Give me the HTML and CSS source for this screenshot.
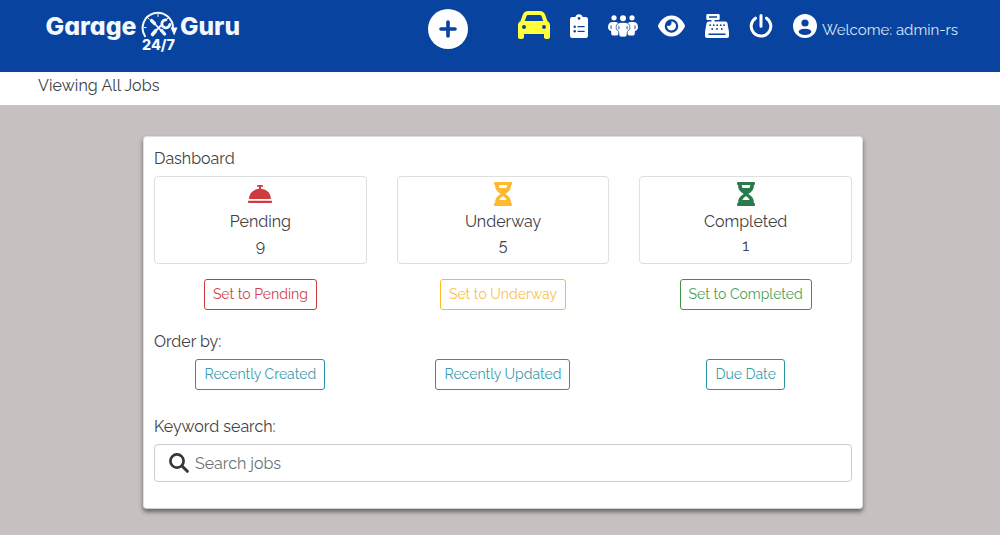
FILE: index.html
```html
<!DOCTYPE html>
<html lang="en">
<head>
<meta charset="utf-8">
<title>Garage Guru 24/7</title>
<link rel="stylesheet" href="styles.css">
</head>
<body>
<header class="topbar">
  <a class="logo" aria-label="Garage Guru 24/7">
    <svg width="200" height="46" viewBox="0 0 200 46">
      <g class="logo-text">
        <text x="4.500" y="27.500" font-size="24.500" textLength="91" lengthAdjust="spacingAndGlyphs">Garage</text>
        <text x="139" y="27.500" font-size="24.500" textLength="60" lengthAdjust="spacingAndGlyphs">Guru</text>
        <text x="101" y="42.500" font-size="14.500" textLength="33" lengthAdjust="spacingAndGlyphs">24/7</text>
      </g>
      <g fill="none" stroke="#f4f8ff" stroke-linecap="round">
        <path d="M104 29.200A15.200 15.200 0 1 1 132 22" stroke-width="2"/>
        <path d="M117 7v2.500M103 20.500h2M107 11l1.200 1.200M127 11l-1.200 1.200" stroke-width="1"/>
        <path d="M110.500 13.500l3 3" stroke-width="3.200"/>
        <path d="M113 16l7 7.500" stroke-width="1.800"/>
        <path d="M120.500 23.500l3 3.500" stroke-width="3.400"/>
        <path d="M111.500 27.500l3-3.500" stroke-width="3.600"/>
        <path d="M115 23.500l5-5" stroke-width="2"/>
        <path d="M125 12.800a4 4 0 1 0 3.800 4.700" stroke-width="2.800"/>
      </g>
      <path d="M129.500 20.500h7l-3.300 8z" fill="#f4f8ff"/>
    </svg>
  </a>
  <a class="add"><svg width="40" height="40" viewBox="0 0 40 40"><circle cx="20" cy="20" r="20" fill="#fff"/><path d="M20 13v14M13 20h14" stroke="#08439f" stroke-width="3.600" stroke-linecap="round"/></svg></a>
  <nav class="nav">
    <svg class="car" width="32" height="32" viewBox="0 0 512 512"><path d="M135.200 117.400L109.100 192H402.900l-26.100-74.600C372.300 104.600 360.200 96 346.600 96H165.400c-13.600 0-25.700 8.600-30.200 21.400zM39.600 196.800L74.800 96.300C88.300 57.800 124.600 32 165.400 32H346.600c40.800 0 77.100 25.800 90.600 64.300l35.200 100.500c23.200 9.600 39.600 32.500 39.600 59.200V448c0 17.700-14.300 32-32 32H448c-17.700 0-32-14.300-32-32V400H96v48c0 17.700-14.300 32-32 32H32c-17.700 0-32-14.300-32-32V256c0-26.700 16.400-49.600 39.600-59.200zM128 288a32 32 0 1 0-64 0 32 32 0 1 0 64 0zm288 32a32 32 0 1 0 0-64 32 32 0 1 0 0 64z"/></svg>
    <svg class="clipboard" width="18" height="24" viewBox="0 0 18 24"><path d="M2.200 3h3.200a3.700 3.700 0 0 1 7.200 0h3.200Q18 3 18 5.200v16.600Q18 24 15.800 24H2.200Q0 24 0 21.800V5.200Q0 3 2.200 3z"/><g fill="#08439f"><circle cx="9" cy="4.400" r="1.300"/><circle cx="4.700" cy="12.700" r="1.200"/><circle cx="4.700" cy="17.300" r="1.200"/><rect x="7.500" y="12" width="7.200" height="1.300" rx=".6"/><rect x="7.500" y="16.700" width="7.200" height="1.300" rx=".6"/></g></svg>
    <svg class="people" width="30" height="22" viewBox="0 0 30 22"><circle cx="6" cy="2.800" r="2.600"/><circle cx="24" cy="2.800" r="2.600"/><path d="M4.500 7h3q3.300 0 3.300 3.500V18q-.5 2.500-2 2.500H5q-1.500 0-1.700-1.500l-.3-3Q0 15 0 12q.3-5 4.500-5z"/><path d="M25.500 7h-3q-3.300 0-3.300 3.500V18q.5 2.500 2 2.500H25q1.500 0 1.700-1.500l.3-3Q30 15 30 12q-.3-5-4.500-5z"/><circle cx="15" cy="3.200" r="3"/><path stroke="#08439f" stroke-width=".7" d="M13 7.400h4q4.900.4 4.900 5.300 0 2.500-2.500 3.700l-.4 3.600q-.2 2-2 2h-4q-1.800 0-2-2l-.4-3.600q-2.500-1.200-2.500-3.700 0-4.900 4.900-5.300z"/><path d="M3 10.800v2.800M27 10.800v2.800M10.900 11.500v2.500M19.100 11.500v2.500" stroke="#08439f" stroke-width=".9" stroke-linecap="round"/></svg>
    <svg class="eye" width="27" height="24" viewBox="0 0 576 512"><path d="M288 32c-80.800 0-145.500 36.800-192.600 80.600C48.600 156 17.300 208 2.500 243.700c-3.300 7.900-3.300 16.700 0 24.600C17.300 304 48.600 356 95.400 399.400 142.500 443.200 207.200 480 288 480s145.500-36.800 192.600-80.600c46.800-43.500 78.100-95.400 93-131.100 3.300-7.900 3.300-16.700 0-24.600-14.900-35.700-46.200-87.700-93-131.100C433.500 68.800 368.800 32 288 32zM144 256a144 144 0 1 1 288 0 144 144 0 1 1-288 0zm144-64c0 35.300-28.700 64-64 64-7.100 0-13.900-1.200-20.300-3.300-5.500-1.800-11.900 1.600-11.700 7.400.3 6.900 1.300 13.800 3.200 20.700 13.700 51.200 66.400 81.600 117.600 67.900s81.600-66.400 67.900-117.600c-11.100-41.500-47.800-69.400-88.600-71.100-5.800-.2-9.200 6.100-7.400 11.700 2.100 6.400 3.300 13.200 3.300 20.300z"/></svg>
    <svg class="register" width="24" height="24" viewBox="0 0 24 24"><path fill-rule="evenodd" d="M2.500 0h11q1.200 0 1.200 1.200v3.600Q14.700 6 13.500 6H9.500v1.500h11q1.700 0 2 1.800L24 18v4q0 2-2 2H2q-2 0-2-2v-4l1.500-8.700q.3-1.800 2-1.800h3V6h-4q-1.200 0-1.200-1.200V1.200Q1.300 0 2.500 0zM4 2.300v1.500h8V2.300zM3.500 19.500V21h17v-1.500z"/><g fill="#08439f"><circle cx="5.200" cy="11.200" r=".9"/><circle cx="8.700" cy="11.200" r=".9"/><circle cx="12.200" cy="11.200" r=".9"/><circle cx="15.700" cy="11.200" r=".9"/><circle cx="19" cy="11.200" r=".9"/><circle cx="7.200" cy="15" r=".9"/><circle cx="12" cy="15" r=".9"/><circle cx="16.800" cy="15" r=".9"/></g></svg>
    <svg class="power" width="24" height="24" viewBox="0 0 24 24"><path d="M12 1.500v10.700M6.500 4.200a9.800 9.800 0 1 0 11 0" fill="none" stroke="#fff" stroke-width="3" stroke-linecap="round"/></svg>
    <a class="user">
      <svg width="24" height="24" viewBox="0 0 24 24"><circle cx="12" cy="12" r="12"/><circle cx="12" cy="9" r="3.600" fill="#08439f"/><ellipse cx="12" cy="17.800" rx="6.300" ry="3.100" fill="#08439f"/></svg>
      <span class="welcome">Welcome: admin-rs</span>
    </a>
  </nav>
</header>
<div class="subbar">Viewing All Jobs</div>
<main class="card">
  <h2 class="label">Dashboard</h2>
  <section class="grid">
    <div class="stat">
      <svg width="24" height="24" viewBox="0 0 24 24" fill="#cf3c3f"><path d="M10 3h4q1 0 1 1v.8h-2v2Q22.500 8 23 17H1Q1.500 8 11 6.800v-2H9V4q0-1 1-1z"/><path d="M0 18.700h24V20q0 1-1 1H1q-1 0-1-1z"/></svg>
      <span>Pending</span><span class="count">9</span>
    </div>
    <div class="stat">
      <svg width="18" height="24" viewBox="0 0 18 24" fill="#fdba2f"><path fill-rule="evenodd" d="M1 0h16q1 0 1 1v1q0 1-1 1Q17 9 11.300 12 17 15 17 21q1 0 1 1v1q0 1-1 1H1q-1 0-1-1v-1q0-1 1-1 0-6 5.700-9Q1 9 1 3 0 3 0 2V1q0-1 1-1zm3.800 3q0 1.500.7 3h7q.7-1.500.7-3zM5.300 18h7.400Q11.500 15.600 9 14 6.500 15.600 5.300 18z"/></svg>
      <span>Underway</span><span class="count">5</span>
    </div>
    <div class="stat">
      <svg width="18" height="24" viewBox="0 0 18 24" fill="#2b7a4b"><path fill-rule="evenodd" d="M1 0h16q1 0 1 1v1q0 1-1 1Q17 9 11.300 12 17 15 17 21q1 0 1 1v1q0 1-1 1H1q-1 0-1-1v-1q0-1 1-1 0-6 5.700-9Q1 9 1 3 0 3 0 2V1q0-1 1-1zm3.800 3q0 1.500.7 3h7q.7-1.500.7-3zM5.300 18h7.400Q11.500 15.600 9 14 6.500 15.600 5.300 18z"/></svg>
      <span>Completed</span><span class="count">1</span>
    </div>
  </section>
  <section class="grid actions">
    <button class="btn red w113">Set to Pending</button>
    <button class="btn yellow w126">Set to Underway</button>
    <button class="btn green w132">Set to Completed</button>
  </section>
  <h2 class="label order">Order by:</h2>
  <section class="grid">
    <button class="btn teal w130">Recently Created</button>
    <button class="btn teal w135">Recently Updated</button>
    <button class="btn teal w79">Due Date</button>
  </section>
  <h2 class="label keyword">Keyword search:</h2>
  <div class="search">
    <svg width="20" height="20" viewBox="0 0 20 20"><circle cx="8" cy="8" r="6.600" fill="none" stroke="#343638" stroke-width="2.700"/><path d="M13 13l5.300 5.300" stroke="#343638" stroke-width="3" stroke-linecap="round"/></svg>
    <span>Search jobs</span>
  </div>
</main>
</body>
</html>
```
FILE: styles.css
```css
* { box-sizing: border-box; }
body { margin: 0; height: 535px; overflow: hidden; background: #c6c1c0; color: #404143; font: 400 16px/24px Raleway, Lato, sans-serif; }
svg { display: block; flex: none; }
.topbar { display: flex; align-items: flex-start; height: 72px; background: #08439f; }
.logo { margin: 7px 0 0 41px; }
.logo-text { fill: #f4f8ff; font-family: Inter, sans-serif; font-weight: 800; font-feature-settings: "cv11" 1; }
.add { margin: 9px 0 0 187px; }
.nav { display: flex; align-items: flex-start; padding-top: 14px; margin-left: 50px; fill: #fff; }
.car { fill: #ffff3b; margin-top: -5px; }
.clipboard { margin-left: 20px; }
.people { margin: 1px 0 0 20px; }
.eye { margin-left: 20px; }
.register { margin-left: 20px; }
.power { margin-left: 20px; }
.user { display: flex; margin-left: 20px; }
.welcome { margin: 4px 0 0 5px; color: #dce5f2; font-size: 15px; white-space: nowrap; }
.subbar { height: 33px; padding: 2px 38px; background: #fff; letter-spacing: .08px; }
.card { width: 720px; height: 373px; margin: 31px 0 0 143px; padding: 10px; background: #fff; border: 1px solid; border-color: #dfdfdf #dfdfdf #cfd2d2; border-radius: 4px; box-shadow: 0 3px 4px rgba(40, 44, 44, .6); }
.label { margin: 0; font-size: 16px; font-weight: 400; line-height: 24px; }
.grid { display: grid; grid-template-columns: repeat(3, 1fr); column-gap: 30px; justify-items: center; }
.label + .grid { margin-top: 5px; }
.stat { width: 100%; height: 88px; padding-top: 5px; display: flex; flex-direction: column; align-items: center; border: 1px solid #dedfe0; border-radius: 4px; }
.stat span { line-height: 24px; margin-top: 4px; }
.stat .count { margin-top: 0; }
.actions { margin-top: 15px; }
.btn { height: 31px; padding: 0; background: #fff; border: 1px solid; border-radius: 3px; font: 400 14px/21px Raleway, Lato, sans-serif; white-space: nowrap; }
.red { color: #cf4348; border-color: #cb393e; }
.yellow { color: #f9bf4b; border-color: #fdb92c; }
.green { color: #4b9f58; border-color: #399447; }
.teal { color: #3b9caf; border-color: #2793a8; }
.w113 { width: 113px; } .w126 { width: 126px; } .w132 { width: 132px; }
.w130 { width: 130px; } .w135 { width: 135px; } .w79 { width: 79px; }
.order { margin-top: 20px; }
.keyword { margin-top: 25px; }
.search { display: flex; align-items: center; height: 38px; margin-top: 5px; padding-left: 14px; border: 1px solid #c9cdd3; border-radius: 4px; }
.search svg { margin-top: -1px; }
.search span { margin: 1px 0 0 6px; color: #6b7279; }
```
